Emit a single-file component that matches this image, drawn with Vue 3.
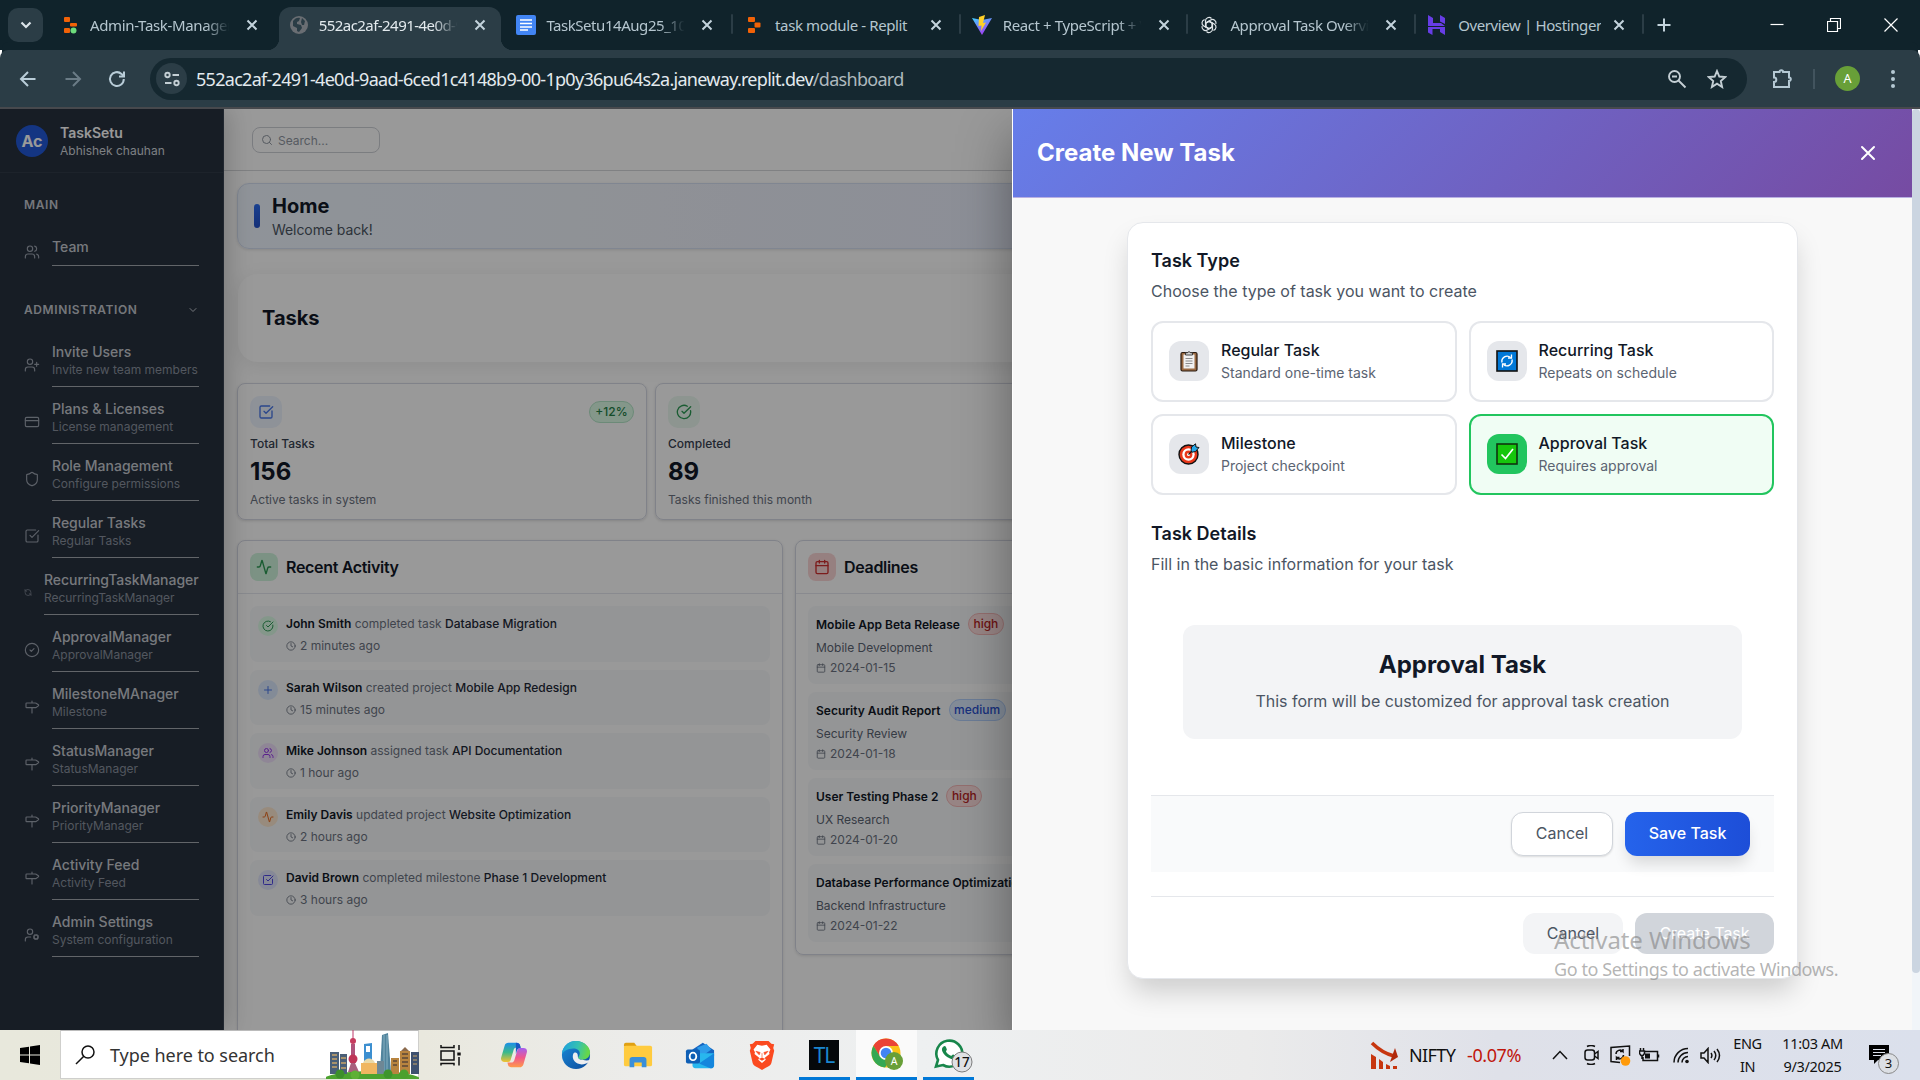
<script setup>
const icons = {
  users: '<path d="M16 21v-2a4 4 0 0 0-4-4H6a4 4 0 0 0-4 4v2"/><circle cx="9" cy="7" r="4"/><path d="M22 21v-2a4 4 0 0 0-3-3.87M16 3.13a4 4 0 0 1 0 7.75"/>',
  userPlus: '<path d="M16 21v-2a4 4 0 0 0-4-4H6a4 4 0 0 0-4 4v2"/><circle cx="9" cy="7" r="4"/><path d="M19 8v6M22 11h-6"/>',
  card: '<rect x="2" y="5" width="20" height="14" rx="2"/><path d="M2 10h20"/>',
  shield: '<path d="M20 13c0 5-3.5 7.5-7.66 8.95a1 1 0 0 1-.67-.01C7.5 20.5 4 18 4 13V6a1 1 0 0 1 1-1c2 0 4.5-1.2 6.24-2.72a1.17 1.17 0 0 1 1.52 0C14.51 3.81 17 5 19 5a1 1 0 0 1 1 1z"/>',
  square: '<path d="M21 10.5V19a2 2 0 0 1-2 2H5a2 2 0 0 1-2-2V5a2 2 0 0 1 2-2h12.5"/><path d="m9 11 3 3L22 4"/>',
  refresh: '<path d="M21 12a9 9 0 0 0-9-9 9.75 9.75 0 0 0-6.74 2.74L3 8M3 3v5h5M3 12a9 9 0 0 0 9 9 9.75 9.75 0 0 0 6.74-2.74L21 16M16 16h5v5"/>',
  check: '<circle cx="12" cy="12" r="10"/><path d="m9 12 2 2 4-4"/>',
  milestone: '<path d="M12 13v8M12 3v3M4 6a1 1 0 0 0-1 1v5a1 1 0 0 0 1 1h13a2 2 0 0 0 1.152-.365l3.424-2.317a1 1 0 0 0 0-1.635l-3.424-2.318A2 2 0 0 0 17 6z"/>',
  userCog: '<circle cx="18" cy="15" r="3"/><circle cx="9" cy="7" r="4"/><path d="M10 15H6a4 4 0 0 0-4 4v2M21.7 16.4l-.9-.3M15.2 13.9l-.9-.3M16.6 18.7l.3-.9M19.1 12.2l.3-.9M19.6 18.7l-.4-1M16.8 12.3l-.4-1M14.3 16.6l1-.4M20.7 13.8l1-.4"/>',
  activity: '<path d="M22 12h-2.48a2 2 0 0 0-1.93 1.46l-2.35 8.36a.25.25 0 0 1-.48 0L9.24 2.18a.25.25 0 0 0-.48 0l-2.35 8.36A2 2 0 0 1 4.49 12H2"/>',
  done: '<path d="M21.801 10A10 10 0 1 1 17 3.335"/><path d="m9 11 3 3L22 4"/>',
  calendar: '<path d="M8 2v4M16 2v4M3 10h18"/><rect x="3" y="4" width="18" height="18" rx="2"/>',
  clock: '<circle cx="12" cy="12" r="10"/><path d="M12 6v6l4 2"/>',
  plus: '<path d="M5 12h14M12 5v14"/>',
  search: '<circle cx="11" cy="11" r="8"/><path d="m21 21-4.3-4.3"/>',
  x: '<path d="M18 6 6 18M6 6l12 12"/>',
  chevron: '<path d="m6 9 6 6 6-6"/>',
}

const favs = {
  replitDot: '<rect x="3" y="2" width="6" height="5" rx="1" fill="#f26207"/><rect x="9" y="8" width="7" height="3.5" rx="1" fill="#f26207"/><rect x="3" y="13" width="6" height="5" rx="1" fill="#f26207"/><circle cx="12.5" cy="15.5" r="3" fill="#6ddc7c"/>',
  globe: '<circle cx="10" cy="10" r="9" fill="#6a6e73"/><path d="M4 6c2-3 5-4 7-3l-1 3-2 1v2l4 1 1 3-3 4-2-1v-3L4 11zM13 3l3 3-1 4h-2l-1-3z" fill="#2b3d46"/>',
  docs: '<rect x="0" y="0" width="20" height="20" rx="2" fill="#4285f4"/><path d="M4 5h12M4 8.500h12M4 12h12M4 15h8" stroke="#fff" stroke-width="1.700"/>',
  replit: '<rect x="4" y="2" width="7" height="5" rx="1" fill="#f26207"/><rect x="10.500" y="7.500" width="6" height="5" rx="1" fill="#f26207"/><rect x="4" y="13" width="7" height="5" rx="1" fill="#f26207"/>',
  vite: '<defs><linearGradient id="vg" x1="0" y1="0" x2=".5" y2="1"><stop stop-color="#41d1ff"/><stop offset="1" stop-color="#a03cf5"/></linearGradient></defs><path d="M0 3 10 20 20 3 10 5z" fill="url(#vg)"/><path d="M13 0 7 2l-.500 9 3-.500L9 16l5-8.500-3 .500z" fill="#ffd028"/>',
  openai: '<g fill="none" stroke="#dfe5e8" stroke-width="1.200"><path id="k" d="M10 6.300 13.500 8.300v5.700a3.500 3.500 0 0 1-6 2.500M10 6.300l-3.500 2"/><use href="#k" transform="rotate(60 10 10)"/><use href="#k" transform="rotate(120 10 10)"/><use href="#k" transform="rotate(180 10 10)"/><use href="#k" transform="rotate(240 10 10)"/><use href="#k" transform="rotate(300 10 10)"/></g>',
  hostinger: '<path d="M1 0l5 3v5h8l4 3H1zM13 0l5 3v6l-5-2.500zM1 12h13l4 0v8l-5-3v-3H5.500L5.500 20 1 17.500z" fill="#673de6"/>',
}

const tabs = [
  { icon: 'replitDot', title: 'Admin-Task-Manager', fade: true, ls: -0.35 },
  { icon: 'globe', title: '552ac2af-2491-4e0d-9a', fade: true, active: true, ls: -0.55 },
  { icon: 'docs', title: 'TaskSetu14Aug25_102', fade: true, ls: -0.45 },
  { icon: 'replit', title: 'task module - Replit', sep: true, ls: -0.38 },
  { icon: 'vite', title: 'React + TypeScript + V', fade: true, sep: true, ls: -0.4 },
  { icon: 'openai', title: 'Approval Task Overvie', fade: true, sep: true, ls: -0.4 },
  { icon: 'hostinger', title: 'Overview | Hostinger', sep: true, last: true, ls: -0.38 },
]

const nav = [
  ['userPlus', 'Invite Users', 'Invite new team members'],
  ['card', 'Plans & Licenses', 'License management'],
  ['shield', 'Role Management', 'Configure permissions'],
  ['square', 'Regular Tasks', 'Regular Tasks'],
  ['refresh', 'RecurringTaskManager', 'RecurringTaskManager'],
  ['check', 'ApprovalManager', 'ApprovalManager'],
  ['milestone', 'MilestoneMAnager', 'Milestone'],
  ['milestone', 'StatusManager', 'StatusManager'],
  ['milestone', 'PriorityManager', 'PriorityManager'],
  ['milestone', 'Activity Feed', 'Activity Feed'],
  ['userCog', 'Admin Settings', 'System configuration'],
]

const feed = [
  ['done', 'green', 'John Smith', 'completed task', 'Database Migration', '2 minutes ago'],
  ['plus', 'blue', 'Sarah Wilson', 'created project', 'Mobile App Redesign', '15 minutes ago'],
  ['users', 'purple', 'Mike Johnson', 'assigned task', 'API Documentation', '1 hour ago'],
  ['activity', 'orange', 'Emily Davis', 'updated project', 'Website Optimization', '2 hours ago'],
  ['square', 'indigo', 'David Brown', 'completed milestone', 'Phase 1 Development', '3 hours ago'],
]

const deadlines = [
  ['Mobile App Beta Release', 'high', 'Mobile Development', '2024-01-15'],
  ['Security Audit Report', 'medium', 'Security Review', '2024-01-18'],
  ['User Testing Phase 2', 'high', 'UX Research', '2024-01-20'],
  ['Database Performance Optimization', 'medium', 'Backend Infrastructure', '2024-01-22'],
]

const emoji = {
  clipboard: '<rect x="3" y="2.500" width="16" height="18.500" rx="1.500" fill="#9a6a42" stroke="#2b1c12" stroke-width="1.200"/><path d="M5.500 4.500h11v14h-11z" fill="#f1f1f1"/><path d="M7.500 5V2.800h2a1.600 1.600 0 0 1 3 0h2V5z" fill="#d8d8d8" stroke="#333" stroke-width=".9"/><path d="M7.500 8.500h7M7.500 11h7M7.500 13.500h7M7.500 16h4" stroke="#8a8a8a" stroke-width="1.100"/>',
  repeat: '<rect x="1" y="1" width="20" height="20" fill="#0078d7" stroke="#111" stroke-width="1.600"/><path d="M6 12.500a5.200 5.200 0 0 1 8.500-5M16 9.500a5.200 5.200 0 0 1-8.500 5" fill="none" stroke="#fff" stroke-width="1.400"/><path d="M12 8h3.500V4.600M10 14H6.500v3.400" fill="none" stroke="#fff" stroke-width="1.300"/>',
  target: '<circle cx="10.500" cy="11.500" r="9.500" fill="#e8371a" stroke="#111" stroke-width="1.400"/><circle cx="10.500" cy="11.500" r="6.200" fill="#fff"/><circle cx="10.500" cy="11.500" r="3.900" fill="#e8371a"/><circle cx="10.500" cy="11.500" r="1.500" fill="#fff"/><path d="m10.500 11.500 5-5" stroke="#111" stroke-width="1.200"/><path d="m13 8 .5-4L17.500.8 18 4l3 .5-3.500 4-3.500.7z" fill="#25a7e8" stroke="#111" stroke-width="1"/>',
  tick: '<rect x="1" y="1" width="20" height="20" fill="#16c60c" stroke="#10330e" stroke-width="1.600"/><path d="m5.500 11.500 4 4L17 6" fill="none" stroke="#fff" stroke-width="1.700"/>',
}
const types = [
  ['clipboard', 'Regular Task', 'Standard one-time task'],
  ['repeat', 'Recurring Task', 'Repeats on schedule'],
  ['target', 'Milestone', 'Project checkpoint'],
  ['tick', 'Approval Task', 'Requires approval'],
]

const apps = [
  { name: 'copilot', svg: '<defs><linearGradient id="c1" x1="0" y1="0" x2="0" y2="1"><stop stop-color="#1a8fe8"/><stop offset=".5" stop-color="#3cb98a"/><stop offset="1" stop-color="#f5c12f"/></linearGradient><linearGradient id="c2" x1="0" y1="0" x2="0" y2="1"><stop stop-color="#a45ff0"/><stop offset=".5" stop-color="#f0588c"/><stop offset="1" stop-color="#ff9a4a"/></linearGradient></defs><path d="M10 3h9c2 0 3 1 3.500 3l.5 2h-4c-2 0-3 1-3.500 3l-3 10c-.5 1.500-1.500 2.500-3 2.500H6c-3 0-4.500-2-3.600-5L6 6c.7-2 2-3 4-3z" fill="url(#c1)"/><path d="M22 29h-9c-2 0-3-1-3.500-3L9 24h4c2 0 3-1 3.500-3l3-10c.5-1.500 1.500-2.500 3-2.500H26c3 0 4.500 2 3.600 5L26 26c-.7 2-2 3-4 3z" fill="url(#c2)"/><path d="M18 3c2.500 0 4 1 4.600 3l.6 2.500c-2.500 0-3.500 1-4 2.500L18 15z" fill="#1857c4"/>' },
  { name: 'edge', svg: '<defs><linearGradient id="e1" x1="0" y1="0" x2="1" y2=".2"><stop stop-color="#1b9de2"/><stop offset=".6" stop-color="#35c1b1"/><stop offset="1" stop-color="#66d749"/></linearGradient><linearGradient id="e2" x1="0" y1="0" x2="1" y2="1"><stop stop-color="#1b8bd8"/><stop offset="1" stop-color="#0c4a9b"/></linearGradient></defs><circle cx="16" cy="16" r="15" fill="url(#e2)"/><path d="M1 15C2 6 8 1 16 1s15 6 15 12c0 5-4 8-8 8-3 0-5-1-5-2s2-2 2-5c0-3-3-5-7-5C7 9 3 12 1 15z" fill="url(#e1)"/><path d="M13 15c-2 6 3 11 9 11 3 0 5-1 7-2 1-1 2-2 2-3-2 1-5 1-8 0-3 0-5-1-5-3 0-1 0-3-1-4s-3-1-4 1z" fill="#edeef0"/>' },
  { name: 'explorer', svg: '<path d="M1 5a2 2 0 0 1 2-2h9l3 4h-14z" fill="#e0a013"/><rect x="1" y="6" width="30" height="22" rx="2" fill="#ffcb3f"/><path d="M7 29v-8a3 3 0 0 1 3-3h12a3 3 0 0 1 3 3v8h-5v-5h-8v5z" fill="#3a8fd9"/>' },
  { name: 'outlook', svg: '<path d="M8 10 19 3l12 8v6H8z" fill="#1565c0"/><path d="m13 8 10-4 5 6-12 9z" fill="#2e9cea"/><path d="M8 14h23v13a3 3 0 0 1-3 3H11a3 3 0 0 1-3-3z" fill="#28b7ee"/><path d="M31 14 15 25l12 5a3 3 0 0 0 4-3z" fill="#1486dd"/><rect x="1" y="10" width="15" height="15" rx="2" fill="#0f5fb5"/><ellipse cx="8.500" cy="17.500" rx="3.500" ry="4" fill="none" stroke="#fff" stroke-width="2"/>' },
  { name: 'brave', svg: '<path d="M9 1h14l3 3 3 .5-1 4 1 3-3 13c-.5 2-3 4-6 5l-4 2.500-4-2.500c-3-1-5.500-3-6-5L3 11.500l1-3-1-4L6 4z" fill="#fb4a20"/><path d="M16 6l5-1 4 5-1.500 3 .5 2-5 4 1 2-4 3.500-4-3.500 1-2-5-4 .5-2L7 10l4-5z" fill="#fff"/><path d="m9.500 12 4.500 1.300-1 2.500zM22.500 12 18 13.300l1 2.500zM16 14v5" fill="#fb4a20" stroke="#fb4a20" stroke-width=".7"/><path d="m12.500 20 3.500 2 3.500-2-3.500-1.200z" fill="#fb4a20"/>' },
  { name: 'tl', tl: true },
  { name: 'chrome', run: true, hot: true, svg: '<circle cx="15" cy="15" r="14.500" fill="#fbc116"/><path d="M15 .5A14.500 14.500 0 0 0 2.400 7.800L9 19l6-11h12.600A14.500 14.500 0 0 0 15 .5z" fill="#ea4335"/><path d="M2.400 7.800A14.500 14.500 0 0 0 14 29.500l6-9-11-2z" fill="#34a853"/><circle cx="15" cy="15" r="7" fill="#fff"/><circle cx="15" cy="15" r="5.300" fill="#4285f4"/><circle cx="23" cy="23" r="9" fill="#689f38"/><text x="23" y="26.800" font-family="Noto Sans,sans-serif" font-size="10.500" text-anchor="middle" fill="#fff">A</text>' },
  { name: 'whatsapp', run: true, svg: '<path d="M3 28.500 5 22A13 13 0 1 1 10 27z" fill="#fff" stroke="#18864b" stroke-width="2.600"/><path d="M10.500 8.500c1-1 2-.5 2.500.7l.8 2c.3.8-1 1.800-.8 2.200 1 2 2.700 3.500 5 4.400.6.2 1.500-1.600 2.200-1.300l2.300 1.200c.8.500.4 2-.6 2.800-1.400 1-3.200.8-5.400-.2-3.500-1.500-5.600-4-7-6.600-1-2-.6-4 1-5.200z" fill="#18864b"/><circle cx="29" cy="24" r="10" fill="#dfe1e4" stroke="#7c7c7c" stroke-width="1"/><text x="29" y="29" font-family="Noto Sans,sans-serif" font-size="13.500" font-weight="500" text-anchor="middle" fill="#111">17</text>' },
]
</script>

<template>
  <div class="screen">
    <div class="tabstrip">
      <div class="drop"><svg width="14" height="14" viewBox="0 0 14 14"><path d="m2.500 4.500 4.500 4.500 4.500-4.500" fill="none" stroke="#dce5ea" stroke-width="2.200" /></svg></div>
      <div v-for="t in tabs" :key="t.title" class="tab" :class="{ active: t.active, sep: t.sep, last: t.last }">
        <svg class="fav" width="20" height="20" viewBox="0 0 20 20" v-html="favs[t.icon]"></svg>
        <span class="ttl" :class="{ fade: t.fade }" :style="{ letterSpacing: t.ls + 'px' }">{{ t.title }}</span>
        <svg class="tx" width="12" height="12" viewBox="0 0 12 12"><path d="m1.500 1.500 9 9M10.500 1.500l-9 9" /></svg>
      </div>
      <svg class="newtab" width="14" height="14" viewBox="0 0 14 14"><path d="M7 .5v13M.5 7h13" stroke="#c3d3dc" stroke-width="2" /></svg>
      <div class="winctl">
        <svg width="14" height="14" viewBox="0 0 14 14"><path d="M.5 6.500h13" /></svg>
        <svg width="14" height="14" viewBox="0 0 14 14"><path d="M.5 3.500h10v10H.5zM3.500 3V.5h10v10H11" /></svg>
        <svg width="14" height="14" viewBox="0 0 14 14"><path d="m.5.5 13 13M13.500.5l-13 13" /></svg>
      </div>
    </div>

    <div class="toolbar">
      <svg class="tb" width="20" height="20" viewBox="0 0 20 20"><path d="M17.500 10H3M10 3l-7 7 7 7" /></svg>
      <svg class="tb dim" width="20" height="20" viewBox="0 0 20 20"><path d="M2.500 10H17M10 3l7 7-7 7" /></svg>
      <svg class="tb" width="20" height="20" viewBox="0 0 20 20"><path d="M16.800 10A6.900 6.900 0 1 1 14.500 4.900L17 7.300M17 2.500v5h-5" /></svg>
      <div class="omni">
        <div class="site"><svg width="18" height="18" viewBox="0 0 18 18"><circle cx="4.500" cy="5" r="2.200" /><path d="M9.500 5H16M2 13h6.500" /><circle cx="13.500" cy="13" r="2.200" /></svg></div>
        <span class="url">552ac2af-2491-4e0d-9aad-6ced1c4148b9-00-1p0y36pu64s2a.janeway.replit.dev<i>/dashboard</i></span>
        <svg class="mag" width="20" height="20" viewBox="0 0 20 20"><circle cx="7.500" cy="7.500" r="5.500" /><path d="m11.500 11.500 7 7M5 7.500h5" /></svg>
        <svg width="20" height="20" viewBox="0 0 20 20"><path d="m10 2 2.300 5.500 6 .5-4.500 4 1.300 6L10 14.700 4.900 18l1.300-6L1.700 8l6-.5z" /></svg>
      </div>
      <svg class="puz" width="22" height="22" viewBox="0 0 22 22"><path d="M3 4h5.500a1.800 1.800 0 0 1 3.600 0H18v5.500a1.800 1.800 0 0 1 0 3.600V19H3v-5a2.300 2.300 0 0 0 0-4.600z" /></svg>
      <span class="vsep"></span>
      <span class="ava">A</span>
      <svg class="dots" width="6" height="20" viewBox="0 0 6 20"><circle cx="3" cy="3" r="2" /><circle cx="3" cy="10" r="2" /><circle cx="3" cy="17" r="2" /></svg>
    </div>

    <div class="page">
      <aside class="side">
        <div class="brand">
          <span class="logo">Ac</span>
          <div><b>TaskSetu</b><small>Abhishek chauhan</small></div>
        </div>
        <div class="sec main-sec">MAIN</div>
        <div class="nitem team">
          <svg class="ic" viewBox="0 0 24 24" v-html="icons.users"></svg>
          <div class="ntext"><b>Team</b></div>
        </div>
        <div class="sec adm">ADMINISTRATION<svg class="ic" viewBox="0 0 24 24" v-html="icons.chevron"></svg></div>
        <div v-for="n in nav" :key="n[1]" class="nitem" :class="{ tight: n[0] === 'refresh' }">
          <svg class="ic" viewBox="0 0 24 24" v-html="icons[n[0]]"></svg>
          <div class="ntext"><b>{{ n[1] }}</b><small>{{ n[2] }}</small></div>
        </div>
      </aside>

      <main class="main">
        <div class="topbar"><div class="search"><svg class="ic" viewBox="0 0 24 24" v-html="icons.search"></svg>Search...</div></div>
        <div class="home"><span class="pill"></span><div><h1>Home</h1><p>Welcome back!</p></div></div>
        <div class="taskhead">Tasks</div>
        <div class="stats">
          <div class="stat">
            <div class="srow"><span class="sic blue"><svg class="ic" viewBox="0 0 24 24" v-html="icons.square"></svg></span><span class="pct">+12%</span></div>
            <h4>Total Tasks</h4><strong>156</strong><p>Active tasks in system</p>
          </div>
          <div class="stat">
            <div class="srow"><span class="sic green"><svg class="ic" viewBox="0 0 24 24" v-html="icons.done"></svg></span></div>
            <h4>Completed</h4><strong>89</strong><p>Tasks finished this month</p>
          </div>
        </div>
        <div class="cols">
          <section class="box recent">
            <header><span class="hic g"><svg class="ic" viewBox="0 0 24 24" v-html="icons.activity"></svg></span>Recent Activity</header>
            <div class="list">
              <div v-for="f in feed" :key="f[2]" class="act">
                <span class="dot" :class="f[1]"><svg class="ic" viewBox="0 0 24 24" v-html="icons[f[0]]"></svg></span>
                <div>
                  <p><b>{{ f[2] }}</b> {{ f[3] }} <em>{{ f[4] }}</em></p>
                  <small><svg class="ic" viewBox="0 0 24 24" v-html="icons.clock"></svg>{{ f[5] }}</small>
                </div>
              </div>
            </div>
          </section>
          <section class="box dead">
            <header><span class="hic r"><svg class="ic" viewBox="0 0 24 24" v-html="icons.calendar"></svg></span>Deadlines</header>
            <div class="list">
              <div v-for="d in deadlines" :key="d[0]" class="dl">
                <div class="dt"><b>{{ d[0] }}</b><span class="lvl" :class="d[1]">{{ d[1] }}</span></div>
                <p>{{ d[2] }}</p>
                <small><svg class="ic" viewBox="0 0 24 24" v-html="icons.calendar"></svg>{{ d[3] }}</small>
              </div>
            </div>
          </section>
        </div>
      </main>

      <div class="overlay"></div>

      <div class="drawer">
        <div class="dhead"><h2>Create New Task</h2><svg class="ic" viewBox="0 0 24 24" v-html="icons.x"></svg></div>
        <div class="dbody">
          <div class="card">
            <h3>Task Type</h3>
            <p class="lead">Choose the type of task you want to create</p>
            <div class="types">
              <div v-for="t in types" :key="t[1]" class="type" :class="{ on: t[0] === 'tick' }">
                <span class="em"><svg width="22" height="22" viewBox="0 0 22 22" v-html="emoji[t[0]]"></svg></span>
                <div><b>{{ t[1] }}</b><small>{{ t[2] }}</small></div>
              </div>
            </div>
            <h3>Task Details</h3>
            <p class="lead">Fill in the basic information for your task</p>
            <div class="stub"><h2>Approval Task</h2><p>This form will be customized for approval task creation</p></div>
            <div class="foot1"><span class="btn line">Cancel</span><span class="btn save">Save Task</span></div>
            <div class="foot2"><span class="btn soft">Cancel</span><span class="btn off">Create Task</span></div>
          </div>
        </div>
      </div>
      <div class="track"><div class="thumb"></div></div>
      <div class="mark"><div class="m1">Activate Windows</div><div class="m2">Go to Settings to activate Windows.</div></div>
    </div>

    <div class="taskbar">
      <div class="start"><svg width="20" height="20" viewBox="0 0 20 20"><path d="M0 3l9-1.300V9.500H0zM10 1.500 20 0v9.500H10zM0 10.500h9v7.800L0 17zM10 10.500h10V20l-10-1.500z" /></svg></div>
      <div class="find">
        <svg width="20" height="20" viewBox="0 0 20 20"><circle cx="13" cy="7" r="6" /><path d="M8.800 11.200 1 19" /></svg>
        <span>Type here to search</span>
        <svg class="city" width="93" height="49" viewBox="0 0 93 49">
          <ellipse cx="46" cy="50" rx="49" ry="9" fill="#4da32f" />
          <path d="M4 22h9v22H4zM14 24h7v20h-7z" fill="#4a5f78" /><path d="M6 25h5M6 29h5M6 33h5M6 37h5M15 28h5M15 33h5M15 38h5" stroke="#c7a468" stroke-width="1.300" />
          <path d="M38 14l8-1v30h-8z" fill="#3c8fd0" /><path d="M40 16h4v6h-4z" fill="#fff" />
          <path d="m56 5 6-2 3 39H54z" fill="#51849d" /><path d="M58 5v37M61 5v37" stroke="#86afc0" />
          <path d="M26.500 0h1v10h-1z" fill="#c0396b" /><circle cx="27" cy="11" r="3" fill="#c63b5e" /><path d="M25 14h4v18h-4z" fill="#b0527a" /><circle cx="27" cy="29" r="4.500" fill="#bf3557" /><path d="m22 42 3-9h4l4 9z" fill="#a8607d" />
          <path d="M35 33h16v11H35z" fill="#f0b661" /><path d="M37 33c2-6 10-6 12 0z" fill="#ead9a8" />
          <path d="M65 28h8v16h-8zM74 21h10v23H74z" fill="#b8843f" /><path d="m75 21 4-4 4 4z" fill="#8b6a4d" /><path d="M67 31h4M67 35h4M76 24h6M76 28h6M76 32h6M76 36h6" stroke="#5b4738" stroke-width="1.300" />
          <path d="M85 22h8v22h-8z" fill="#3d506f" /><path d="M87 26h4M87 30h4M87 34h4" stroke="#c7a468" stroke-width="1.200" /><path d="M51 31h7v13h-7z" fill="#6e8795" />
          <circle cx="14" cy="44" r="4.500" fill="#3d8f2b" /><circle cx="29" cy="45" r="4.500" fill="#5fb035" /><circle cx="62" cy="44" r="4.500" fill="#3e942c" /><circle cx="78" cy="44" r="4.500" fill="#4ba02e" />
        </svg>
      </div>
      <div class="app view"><svg width="22" height="22" viewBox="0 0 22 22" fill="none" stroke="#111" stroke-width="1.500"><path d="M1 7h13v9H1zM1 1v2.500h13V1M1 21.500v-2h13v2M19 1v5M19 13v8.500" /><path d="M17.300 8.500h3.400v3h-3.400z" fill="#111" stroke="none" /></svg></div>
      <div v-for="a in apps" :key="a.name" class="app" :class="{ run: a.run || a.tl, hot: a.hot }">
        <span v-if="a.tl" class="tl">TL</span>
        <svg v-else-if="a.run" class="wide" width="34" height="34" viewBox="0 0 34 34" v-html="a.svg"></svg>
        <svg v-else width="30" height="30" viewBox="0 0 32 32" v-html="a.svg"></svg>
      </div>
      <div class="tray">
        <svg width="29" height="28" viewBox="0 0 29 28"><path d="M2 2c8 8 14 11 22 13" stroke="#c7360f" stroke-width="3.500" fill="none" /><path d="M20 21l8-5-3-9z" fill="#b02a0c" /><path d="M1 13l5 3v12H1zM9 18l4 3v7H9zM16 23l4 2v3h-4zM23 25h4v3h-4z" fill="#c7360f" /></svg>
        <span class="nifty">NIFTY</span><span class="neg">-0.07%</span>
        <svg class="up" width="16" height="10" viewBox="0 0 16 10"><path d="m1 9 7-7.500L15 9" /></svg>
        <svg class="g1" width="15" height="20" viewBox="0 0 15 20"><rect x="1" y="5" width="9.500" height="10" rx="2.500" /><path d="m10.500 9 3.500-2.500v7L10.500 11M3 1.500q4-2 8 0M3 18.500q4 2 8 0" /></svg>
        <svg class="g2" width="21" height="21" viewBox="0 0 21 21"><path d="M10 17.500 1 16.500V2.500L19.500 1v10M6 9a4 4 0 0 1 7-2.500V4M13 6.500h-3M13.500 10a4 4 0 0 1-7 2.500V15M6.500 12.500h3" /><circle cx="15.500" cy="16" r="4.800" fill="#ff9a0a" stroke="none" /></svg>
        <svg class="g3" width="21" height="14" viewBox="0 0 21 14"><path d="M6 3.500h12.500v9H4V9M19.500 6.500v3M1.500 0v3M4.500 0v3M.5 3h5v2.500l-1.500 2H2L.5 5.500zM3 7.500V11" /><path d="M6 5.500h5v5H6z" fill="#111" stroke="none" /></svg>
        <svg class="g4" width="17" height="17" viewBox="0 0 17 17"><path d="M1 15.500A14 14 0 0 1 15 1.500M5 15.500a10 10 0 0 1 10-10M9 15.500a6 6 0 0 1 6-6" /><circle cx="14" cy="14.500" r="1.800" fill="#111" stroke="none" /></svg>
        <svg class="g5" width="21" height="17" viewBox="0 0 21 17"><path d="M1 6h3l4-4.500v14L4 11H1zM11 6q1.800 2.500 0 5M14 4q3.500 4.500 0 9M17 2q5 6.500 0 13" /></svg>
        <div class="two lang"><span>ENG</span><span>IN</span></div>
        <div class="two time"><span>11:03 AM</span><span>9/3/2025</span></div>
        <div class="note"><svg width="21" height="20" viewBox="0 0 21 20"><path d="M0 0h20v15H9l-4 4v-4H0z" fill="#000" /><path d="M4 4.500h12M4 7.500h12M4 10.500h8" stroke="#dde1eb" stroke-width="1.200" /></svg><span>3</span></div>
      </div>
    </div>
  </div>
</template>

<style>
body { margin: 0; overflow: hidden; }
</style>

<style scoped>
* { box-sizing: border-box; }
h1, h2, h3, h4, p { margin: 0; }
.screen { width: 1920px; height: 1080px; overflow: hidden; display: flex; flex-direction: column; font-family: Inter, "Liberation Sans", sans-serif; }
.ic { fill: none; stroke: currentColor; stroke-width: 2; stroke-linecap: round; stroke-linejoin: round; flex: none; }
svg { flex: none; }

.tabstrip, .toolbar, .taskbar, .mark { font-family: "Noto Sans", "Open Sans", sans-serif; }
.tabstrip { height: 50px; flex: none; background: #10232b; display: flex; align-items: center; }
.drop { width: 35px; height: 34px; margin-left: 8px; margin-right: 8px; border-radius: 10px; background: #2b3d46; display: flex; align-items: center; justify-content: center; }
.tab { width: 227.700px; height: 50px; display: flex; align-items: center; padding-left: 10px; color: #b5c6cf; font-size: 15px; position: relative; }
.fav { margin-right: 10px; }
.drop + .tab .fav { margin-right: 9px; }
.drop + .tab .ttl { width: 144px; }
.sep .fav { margin-right: 11px; }
.ttl { width: 143px; overflow: hidden; white-space: nowrap; line-height: 24px; }
.fade { -webkit-mask-image: linear-gradient(90deg, #000 80%, transparent 97%); mask-image: linear-gradient(90deg, #000 80%, transparent 97%); }
.tx { margin-left: 12px; fill: none; stroke: #c3d3dc; stroke-width: 2; }
.active { color: #e3eaee; }
.active::before { content: ""; position: absolute; z-index: 0; left: 0; right: 5.500px; top: 7px; bottom: 0; background: #2b3d46; border-radius: 12px 12px 0 0; }
.active::after { content: ""; position: absolute; z-index: 0; left: -12px; right: -6.500px; bottom: 0; height: 12px; background: radial-gradient(circle at 0 0, transparent 12px, #2b3d46 12.500px) left / 12px 12px no-repeat, radial-gradient(circle at 100% 0, transparent 12px, #2b3d46 12.500px) right / 12px 12px no-repeat; }
.active > * { position: relative; z-index: 1; }
.sep::before, .last::after { content: ""; position: absolute; left: -3px; top: 14px; height: 20px; width: 2px; border-radius: 1px; background: #2b3d46; }
.last::after { left: 225px; }
.newtab { margin-left: 12px; }
.winctl { margin-left: auto; display: flex; gap: 43px; padding-right: 22px; }
.winctl svg { fill: none; stroke: #fff; stroke-width: 1.200; }

.toolbar { height: 59px; flex: none; background: #2b3d46; border-bottom: 2px solid #47494d; border-radius: 8px 8px 0 0; box-shadow: 0 -10px 0 -2px #10232b; display: flex; align-items: center; padding: 0 0 0 18px; }
.tb { margin-right: 24.500px; fill: none; stroke: #b9cdd8; stroke-width: 2; }
.tb.dim { stroke: #6b7c86; }
.omni { width: 1597px; height: 42px; margin-left: -1.500px; border-radius: 21px; background: #152830; display: flex; align-items: center; padding: 0 20px 0 6px; }
.omni svg { fill: none; stroke: #c4cfd4; stroke-width: 1.900; }
.site { width: 31px; height: 31px; border-radius: 50%; background: #2b3d46; display: flex; align-items: center; justify-content: center; }
.url { margin-left: 9px; color: #e3eaee; font-size: 18px; letter-spacing: -.71px; white-space: nowrap; }
.url i { font-style: normal; color: #aeb9be; }
.mag { margin-left: auto; margin-right: 20px; }
.puz { margin-left: 24px; fill: none; stroke: #b5c9d4; stroke-width: 2; }
.vsep { width: 2px; height: 20px; background: #42545e; margin-left: 20px; }
.ava { width: 25px; height: 25px; border-radius: 50%; background: #689f38; color: #fff; font-size: 12.500px; line-height: 25px; text-align: center; margin-left: 20px; }
.dots { margin-left: 30px; fill: #b5c9d4; }

.page { position: relative; height: 921px; flex: none; display: flex; background: #fff; overflow: hidden; }
.side { width: 224px; flex: none; background: #27313f; border-right: 1px solid #374151; color: #fff; position: relative; z-index: 1; box-shadow: 4px 0 24px rgba(0,0,0,.2); }
.brand { height: 64px; display: flex; align-items: center; gap: 12px; padding-left: 16px; border-bottom: 1px solid #313b49; }
.logo { width: 32px; height: 32px; border-radius: 50%; background: #2259d9; color: #fff; font-size: 16px; font-weight: 700; line-height: 32px; text-align: center; }
.brand b { display: block; font-size: 14px; font-weight: 600; line-height: 18px; margin-top: 2px; }
.brand small { display: block; font-size: 12px; line-height: 18px; color: #d1d5db; }
.sec { font-size: 12px; font-weight: 600; letter-spacing: .6px; color: #c3c7ce; line-height: 16px; padding: 0 24px; }
.main-sec { margin-top: 24px; height: 35px; }
.adm { display: flex; justify-content: space-between; margin-top: 36px; height: 40px; }
.adm .ic { width: 12px; height: 12px; margin-top: 2px; }
.nitem { display: flex; align-items: center; gap: 12px; padding: 0 24px; margin-bottom: 12px; color: #c6cad1; }
.team { margin-bottom: 0; margin-top: 5px; }
.nitem .ic { width: 16px; height: 16px; color: #9ca3af; stroke-width: 1.700; }
.nitem.tight .ic { width: 8px; height: 9px; }
.ntext { flex: 1; border-bottom: 1px solid #a3a8b0; padding-bottom: 8px; white-space: nowrap; }
.tight .ntext { letter-spacing: -.05px; }
.ntext b { display: block; font-size: 14px; line-height: 20px; font-weight: 500; }
.ntext small { display: block; font-size: 12px; line-height: 16px; color: #8a929e; }

.main { flex: 1; }
.topbar { height: 62px; border-bottom: 1px solid #d5d7da; display: flex; align-items: center; padding: 0 28px; }
.search { width: 128px; height: 26px; border: 1px solid #cdd0d6; border-radius: 8px; display: flex; align-items: center; gap: 5px; padding-left: 8px; font-size: 12px; color: #9097a2; margin-top: 1px; }
.search .ic { width: 12px; height: 12px; }
.home { margin: 12px 0 0 13px; height: 66px; border: 1px solid #d5dff2; border-radius: 12px; background: linear-gradient(90deg, #eff6ff 0, #eff3fb 20%, #e9edfc 50%); box-shadow: 0 1px 3px rgba(0,0,0,.12); display: flex; align-items: center; padding-left: 16px; gap: 12px; }
.pill { width: 6px; height: 24px; border-radius: 4px; background: linear-gradient(#2c6cf0, #2350c8); }
.home h1 { font-size: 20px; line-height: 25px; font-weight: 700; color: #111827; margin-top: 1px; }
.home p { font-size: 14px; line-height: 20px; color: #4b5563; margin-top: 1px; letter-spacing: -.08px; }
.taskhead { margin: 25px 0 0 14px; height: 88px; border-radius: 20px; display: flex; align-items: center; padding-left: 24px; font-size: 20px; font-weight: 700; color: #111827; box-shadow: 0 4px 20px rgba(0,0,0,.08); }
.stats { display: flex; gap: 8px; margin: 21px 0 0 13px; }
.stat { width: 410px; height: 137px; flex: none; border: 1px solid #d6d9e4; border-radius: 8px; padding: 12px; box-shadow: 0 1px 3px rgba(0,0,0,.14); }
.srow { display: flex; justify-content: space-between; align-items: center; }
.sic { width: 32px; height: 32px; border-radius: 10px; display: flex; align-items: center; justify-content: center; }
.sic .ic { width: 16px; height: 16px; }
.sic.blue { background: #edf3fe; color: #4877e8; }
.sic.green { background: #ebf9f0; color: #2c9a54; }
.pct { width: 45px; height: 22px; line-height: 20px; border: 1px solid #b5e6c8; border-radius: 11px; background: #dcfce7; color: #258048; font-size: 12px; font-weight: 500; text-align: center; }
.stat h4 { font-size: 12px; line-height: 16px; font-weight: 500; color: #374151; margin-top: 8px; }
.stat strong { display: block; font-size: 24px; line-height: 32px; font-weight: 700; color: #111827; margin-top: 4px; }
.stat p { font-size: 12px; line-height: 16px; color: #6b7280; margin-top: 4px; }
.cols { display: flex; gap: 12px; margin: 20px 0 0 13px; align-items: flex-start; }
.box { border: 1px solid #d6d9e4; border-radius: 8px; box-shadow: 0 1px 3px rgba(0,0,0,.12); flex: none; }
.recent { width: 546px; height: 520px; }
.dead { width: 546px; height: 415px; }
.box header { height: 53px; border-bottom: 1px solid #e4e7ee; display: flex; align-items: center; gap: 8px; padding-left: 12px; font-size: 16px; font-weight: 600; color: #111827; letter-spacing: -.32px; }
.hic { width: 28px; height: 28px; border-radius: 8px; display: flex; align-items: center; justify-content: center; }
.hic .ic { width: 16px; height: 16px; }
.hic.g { background: #cff3dc; color: #2c9a54; }
.hic.r { background: #fbd5d5; color: #cf2f2f; }
.list { padding: 12px; display: flex; flex-direction: column; gap: 8px; }
.act { height: 55.500px; background: #f7f9fb; border-radius: 8px; display: flex; padding: 10px 8px 0; gap: 8px; }
.dot { width: 20px; height: 20px; border-radius: 50%; display: flex; align-items: center; justify-content: center; }
.dot .ic { width: 12px; height: 12px; }
.dot.green { background: #dcfce7; color: #2c9a54; }
.dot.blue { background: #dbe8fc; color: #4877e8; }
.dot.purple { background: #efe0fb; color: #9333ea; }
.dot.orange { background: #fde8d0; color: #ea6a20; }
.dot.indigo { background: #dfe4fc; color: #4f46e5; }
.act p { font-size: 12px; line-height: 16px; color: #6b7280; white-space: nowrap; }
.act b { font-weight: 600; color: #111827; }
.act em { font-style: normal; font-weight: 500; color: #1f2937; }
.act small, .dl small { display: flex; align-items: center; gap: 4px; font-size: 12px; line-height: 16px; color: #6b7280; margin-top: 6px; }
.act small .ic { width: 10px; height: 10px; }
.dl { height: 78px; background: #f7f9fb; border-radius: 8px; padding: 7px 8px; white-space: nowrap; }
.dt { display: flex; align-items: center; gap: 8px; height: 22px; font-size: 12px; color: #111827; }
.dt b { font-weight: 600; }
.lvl { height: 22px; line-height: 20px; border-radius: 11px; padding: 0 4.500px; font-weight: 500; border: 1px solid; }
.high { background: #fddede; border-color: #f5b8b8; color: #b62323; }
.medium { background: #dbe9fe; border-color: #b3cffa; color: #2a52d0; }
.dl p { font-size: 12px; line-height: 16px; color: #5b6472; margin-top: 5px; }
.dl small { margin-top: 4px; gap: 4px; }
.dl small .ic { width: 10px; height: 10px; }

.overlay { position: absolute; z-index: 2; inset: 0 908px 0 0; background: rgba(0,0,0,.4); }
.drawer { position: absolute; z-index: 3; left: 1012px; top: 0; width: 900px; height: 921px; background: #f8f8f8; border-left: 1px solid #fff; box-shadow: 0 25px 50px rgba(0,0,0,.38); display: flex; flex-direction: column; }
.dhead { height: 89px; flex: none; background: linear-gradient(135deg, #667eea, #764ba2); border-bottom: 1px solid #b9b0e2; color: #fff; display: flex; align-items: center; justify-content: space-between; padding: 0 32px 0 24px; }
.dhead h2 { font-size: 24px; font-weight: 700; margin-top: -2px; }
.dhead .ic { width: 24px; height: 24px; }
.dbody { padding: 24px 114px 0 114px; }
.card { width: 671px; height: 757px; background: #fff; border: 1px solid #e5e7eb; border-radius: 16px; box-shadow: 0 16px 28px -4px rgba(0,0,0,.18); padding: 24px 23px; }
.card h3 { font-size: 18px; line-height: 28px; font-weight: 600; color: #111827; }
.lead { font-size: 16px; line-height: 24px; color: #4b5563; margin-top: 4px; }
.types { display: grid; grid-template-columns: 1fr 1fr; gap: 12px; margin: 18px 0 25px; }
.type { height: 81px; border: 2px solid #e5e7eb; border-radius: 12px; display: flex; align-items: center; gap: 12px; padding: 0 16px; }
.em { width: 40px; height: 40px; border-radius: 12px; background: #e5e7eb; display: flex; align-items: center; justify-content: center; margin-top: -1px; }
.type.on { border-color: #22c55e; background: #f0fdf4; }
.on .em { background: #22c55e; }
.type b { display: block; font-size: 16px; line-height: 24px; font-weight: 500; color: #111827; margin-top: -2px; }
.type small { display: block; font-size: 14px; line-height: 20px; color: #5b6472; margin-top: 1px; }
.stub { margin: 49px 32px 0; height: 114px; border-radius: 12px; background: #f3f4f6; text-align: center; padding-top: 24px; }
.stub h2 { font-size: 24px; line-height: 32px; font-weight: 700; color: #111827; }
.stub p { font-size: 16px; line-height: 24px; color: #4b5563; margin-top: 8px; }
.foot1 { margin-top: 56px; height: 77px; background: #f9fafb; border-top: 1px solid #e5e7eb; padding: 16px 24px; display: flex; justify-content: flex-end; gap: 12px; }
.foot2 { margin-top: 24px; border-top: 1px solid #e5e7eb; padding-top: 16px; display: flex; justify-content: flex-end; gap: 12px; }
.btn { height: 44px; display: flex; align-items: center; justify-content: center; border-radius: 12px; font-size: 16px; white-space: nowrap; padding-bottom: 2px; }
.line { width: 102px; background: #fff; border: 1px solid #d1d5db; color: #4b5563; box-shadow: 0 1px 2px rgba(0,0,0,.12); }
.save { width: 125px; background: linear-gradient(90deg, #2563eb, #1d4ed8); color: #fff; font-weight: 500; box-shadow: 0 10px 15px -3px rgba(0,0,0,.14); }
.soft { width: 100px; height: 41px; background: #f3f4f6; color: #4b5563; }
.off { width: 139px; height: 41px; background: #d1d5db; color: #fff; }
.track { position: absolute; z-index: 4; right: 0; top: 0; width: 8px; height: 921px; background: #f1f5f9; }
.thumb { height: 864px; border-radius: 4px; background: #cbd5e1; }
.mark { position: absolute; z-index: 5; left: 1554px; top: 814px; color: rgba(130,130,130,.6); white-space: nowrap; }
.m1 { font-size: 24px; line-height: 34px; letter-spacing: -.1px; }
.m2 { font-size: 18px; line-height: 24px; letter-spacing: -.4px; }

.taskbar { height: 50px; flex: none; background: linear-gradient(90deg, #e8e8dc, #e9e8de 22%, #ececea 33%, #eef0f1 48%, #ebebeb 65%, #dfe1e9 78%, #dbe0ec); display: flex; }
.start { width: 60px; display: flex; align-items: center; justify-content: center; }
.find { width: 359px; height: 49px; background: #fff; border: 1px solid #cfcfcc; border-top-color: #bbb; display: flex; align-items: center; padding-left: 14px; font-size: 18px; color: #333; letter-spacing: -.05px; white-space: nowrap; }
.find > svg:first-child { fill: none; stroke: #111; stroke-width: 1.500; margin-right: 15px; }
.city { margin-left: auto; margin-right: -1px; }
.app { width: 62px; display: flex; align-items: center; justify-content: center; position: relative; }
.view { width: 64px; }
.run { box-shadow: inset 0 -3px 0 #0078d7; background-clip: content-box; margin: 0 5.500px; width: 51px; }
.hot { width: 61px; margin: 0 .5px; background: #fafafa; background-clip: border-box; }
.wide { margin-left: 3px; overflow: visible; }
.tl { width: 30px; height: 30px; background: #05080b; color: #1b86cf; font-size: 21px; line-height: 30px; text-align: center; letter-spacing: -1px; }
.tray { margin-left: auto; width: 550px; display: flex; align-items: center; font-size: 18px; color: #111; }
.nifty { margin-left: 10px; width: 58px; letter-spacing: -.6px; }
.neg { color: #c0160c; letter-spacing: -.4px; width: 85px; }
.tray svg[class] { fill: none; stroke: #111; stroke-width: 1.500; }
.g1 { margin-left: 16px; }
.g2 { margin-left: 11px; }
.g3 { margin-left: 8px; }
.g4 { margin-left: 12.500px; }
.g5 { margin-left: 10px; }
.two { display: flex; flex-direction: column; align-items: center; font-size: 14.500px; line-height: 23px; letter-spacing: -.35px; white-space: nowrap; }
.lang { margin-left: 11px; width: 32px; }
.time { margin-left: 15px; width: 68px; }
.note { position: relative; margin-left: 22.500px; height: 20px; }
.note span { position: absolute; left: 9px; top: 8px; width: 21px; height: 21px; border-radius: 50%; border: 1px solid #888; background: #dcdfe4; font-size: 13px; line-height: 19px; text-align: center; }
</style>
